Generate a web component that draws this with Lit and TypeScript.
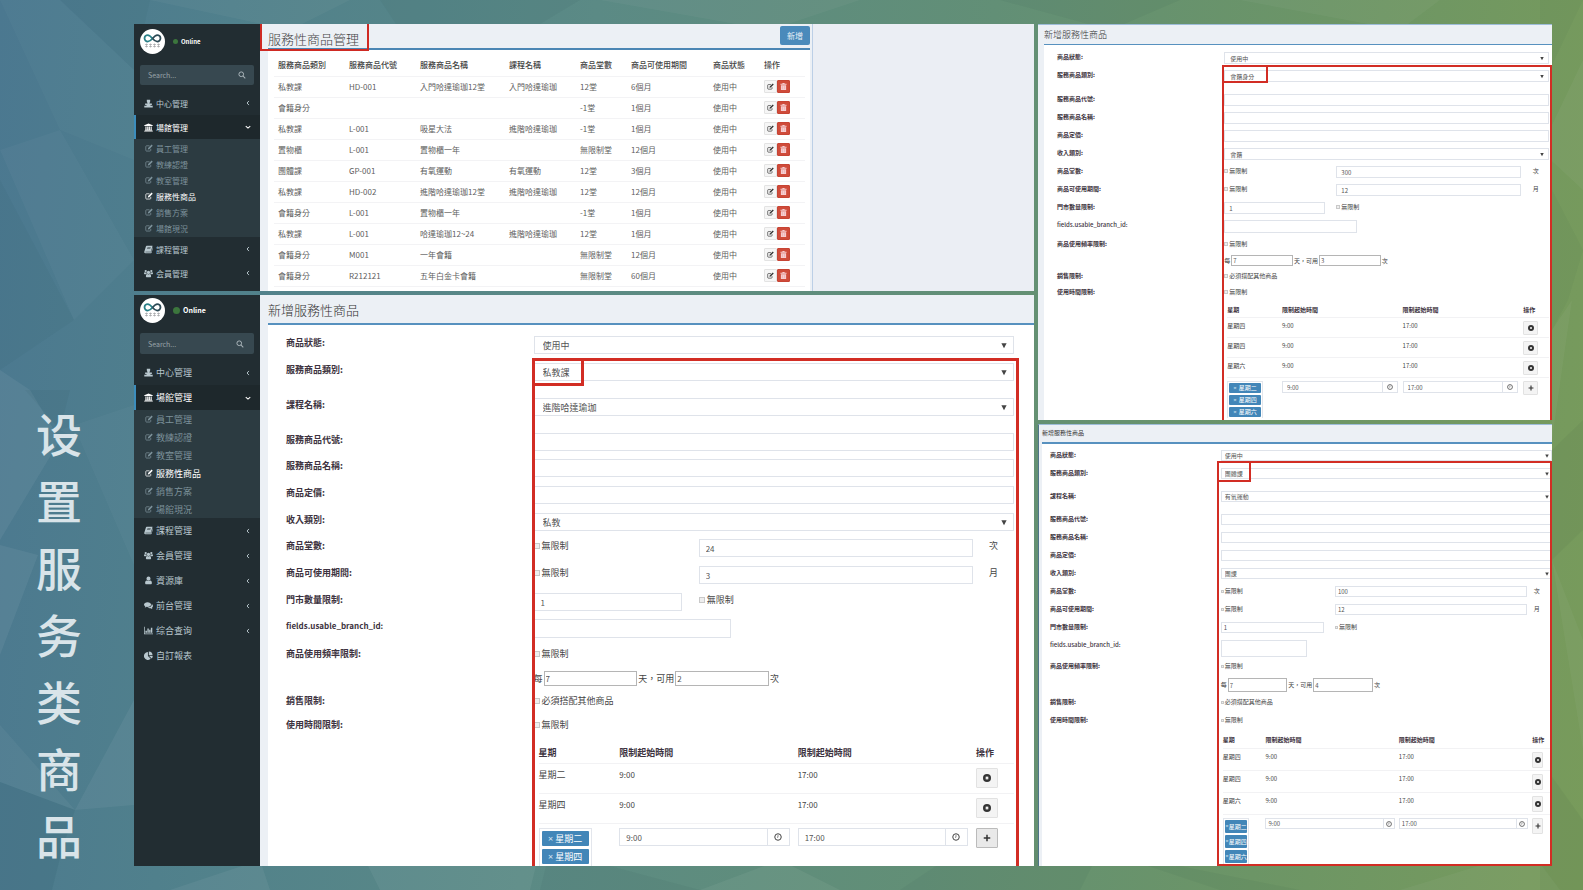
import { LitElement, html, svg, css, nothing } from "lit";
import { customElement, property } from "lit/decorators.js";
import { classMap } from "lit/directives/class-map.js";

const glyphs: Record<string, unknown> = {
  center: svg`<path d="M5 1.500h6v2.400c0 1.500-.6 2.500-1.300 3.100v1H14v2.500h-2.500V12h4V15H.5v-3h4v-1.500H2V8h4.300V7C5.600 6.400 5 5.400 5 3.900z"/>`,
  bank: svg`<path d="M8 .8 15.500 4v1.400H.5V4zM2.500 6.200h2v5.600h1.200V6.200h2v5.600h.8V6.200h2v5.600h1.200V6.200h2v5.600l1 .8v.6h-13v-.6l.8-.8zM.3 13.700h15.400v1.500H.3z"/>`,
  edit: svg`<path d="M11.500 9.500v3.200c0 .8-.6 1.400-1.400 1.400H3c-.8 0-1.400-.6-1.400-1.400V5c0-.8.6-1.400 1.400-1.400h6" fill="none" stroke="currentColor" stroke-width="1.500"/><path d="M13.200 1.200l2.200 2.200-6.900 7-2.900.6.6-2.900z"/>`,
  search: svg`<circle cx="6.500" cy="6.500" r="4.700" fill="none" stroke="currentColor" stroke-width="2"/><path d="M9.600 11l1.400-1.400 4.300 4.200-1.400 1.500z"/>`,
  book: svg`<path d="M4.800 1.500h10.400l-2.800 10.300H3.200c-.8 0-1 1 0 1.100h9.700l2.600-8.800.5.6-2.500 9c-.1.500-.5.800-1 .8H2.600C.8 14.500 0 13 .6 11.400L3.400 2.700c.2-.7.700-1.200 1.400-1.200zM6.200 4l-.3 1h6l.3-1zm-.7 2.300-.3 1h6l.3-1z" fill-rule="evenodd"/>`,
  users: svg`<circle cx="8" cy="6" r="2.900"/><circle cx="3" cy="3.700" r="2"/><circle cx="13" cy="3.700" r="2"/><path d="M3.400 13c0-2.600 1-4 2.300-4 1.400 1.100 3.200 1.100 4.600 0 1.300 0 2.300 1.400 2.300 4 0 1-.6 1.800-1.600 1.800H5c-1 0-1.600-.8-1.600-1.800zM0 8c0-1.400.5-2.400 1.500-2.400 1 .7 1.900.7 2.800.3C4.300 7 4.500 7.700 5 8.400c-1 0-1.600.4-2 1H1.200C.5 9.400 0 8.800 0 8zM16 8c0-1.400-.5-2.400-1.500-2.400-1 .7-1.900.7-2.800.3 0 1.100-.2 1.800-.7 2.500 1 0 1.600.4 2 1h1.800c.7 0 1.200-.6 1.200-1.400z"/>`,
  user: svg`<circle cx="8" cy="4.700" r="3.600"/><path d="M2 12.500c0-3 1-4.700 2.900-4.700 1.900 1.500 4.300 1.500 6.200 0 1.900 0 2.900 1.700 2.900 4.700 0 1.400-.8 2.300-2 2.300H4c-1.200 0-2-.9-2-2.300z"/>`,
  comments: svg`<path d="M6.300 2C2.800 2 0 3.900 0 6.300c0 1.400.9 2.600 2.300 3.400L1.400 11.600c1.400-.2 2.500-.7 3.400-1.200 4.200.5 7.800-1.500 7.800-4.100C12.600 3.900 9.800 2 6.300 2z"/><path d="M13.700 5.500c.5 3.400-3 6-7.500 6.100 1.600 1.200 3.800 1.500 5.600 1.100.9.700 2 1.100 3.100 1.200l-.8-1.700c2.700-1.700 2.400-5.200-.4-6.700z"/>`,
  chart: svg`<path d="M0 1.500h1.300v11.700H16v1.300H0zM2.500 8.500h2.700V12H2.500zM6 4.500h2.500V12H6zM9.200 6.500h2.300V12H9.200zM12.200 3h2.600v9h-2.600z"/>`,
  pie: svg`<path d="M7 2v7l5 4.800A7 7 0 1 1 7 2z"/><path d="M8.500.8a6.800 6.800 0 0 1 6.700 6.700H8.500z"/><path d="M9.200 8.800h6.300c0 1.800-.7 3.300-1.800 4.400z"/>`,
  left: svg`<path d="M10.500 2.500 5.500 8l5 5.500" fill="none" stroke="currentColor" stroke-width="2.600"/>`,
  down: svg`<path d="M2 5.500 8 11l6-5.500" fill="none" stroke="currentColor" stroke-width="2.800"/>`,
  trash: svg`<path d="M5.500 0h5v1.500H15v2.500H1V1.500h4.500zM2 5h12v11H2z"/><path d="M5.500 7v7M10.500 7v7" stroke="#e59a98" stroke-width="1"/>`,
  caret: svg`<path d="M1 2h14L8 15z"/>`,
  close: svg`<circle cx="8" cy="8" r="8"/><path d="M5.500 5.500l5 5M10.500 5.500l-5 5" stroke="#f4f4f4" stroke-width="2.200"/>`,
  plus: svg`<path d="M6.500 1.500h3v5h5v3h-5v5h-3v-5h-5v-3h5z"/>`,
  clock: svg`<circle cx="8" cy="8" r="6.500" fill="none" stroke="currentColor" stroke-width="2"/><path d="M8 4v4.500H6" fill="none" stroke="currentColor" stroke-width="1.200"/>`,
};

const icon = (name: string) =>
  html`<svg class="icon" viewBox="0 0 16 16" fill="currentColor" aria-hidden="true">${glyphs[name]}</svg>`;

const base = css`
  * { box-sizing: border-box; }
  button, input, select { font: inherit; color: inherit; margin: 0; border-radius: 0; }
  .icon { display: block; flex: none; }
`;

interface MenuItem { icon: string; text: string; open?: boolean; leaf?: boolean; }

const menuItems: MenuItem[] = [
  { icon: "center", text: "中心管理" },
  { icon: "bank", text: "場館管理", open: true },
  { icon: "book", text: "課程管理" },
  { icon: "users", text: "会員管理" },
  { icon: "user", text: "資源庫" },
  { icon: "comments", text: "前台管理" },
  { icon: "chart", text: "综合查询" },
  { icon: "pie", text: "自訂報表", leaf: true },
];
const subItems = ["員工管理", "教練認證", "教室管理", "服務性商品", "銷售方案", "場館現況"];

@customElement("side-menu")
export class SideMenu extends LitElement {
  @property({ type: Number }) count = 8;

  static styles = [base, css`
    :host {
      --head: 34px; --fs: 8px; --item: 24px; --sub: 16px; --pad: 1px; --online: 6px; --dot: 5px; --search: 20px; --top: 7px; --end: 8px;
      display: block; background: #222d32; color: #b8c7ce; overflow: hidden; font-size: var(--fs);
    }
    :host([large]) {
      --head: 30px; --fs: 9px; --item: 25px; --sub: 18px; --pad: 0px; --online: 7px; --dot: 7px; --search: 21px; --top: 8px; --end: 10px;
    }
    .user { display: flex; align-items: center; height: var(--head); padding-left: 6px; color: #fff; }
    .logo { width: 25px; height: 25px; flex: none; }
    .dot { width: var(--dot); height: var(--dot); border-radius: 50%; background: #3c763d; margin: 0 3px 0 8px; }
    .online { font-size: var(--online); font-weight: 700; }
    .search { display: flex; align-items: center; height: var(--search); margin: var(--top) 6px 6px 6px; padding: 0 var(--end) 0 8px;
      background: #374850; border-radius: 2px; }
    .search input { flex: 1; min-width: 0; border: 0; padding: 0; background: none; font-size: 7px; outline: 0; }
    .search input::placeholder { color: #97a3a8; }
    .search button { border: 0; padding: 0; background: none; color: #a9b4b9; }
    .search .icon { width: 8px; height: 8px; }
    nav a { display: flex; align-items: center; color: inherit; text-decoration: none; }
    .item { height: var(--item); padding: 0 9px 0 8px; border-left: 2px solid transparent; gap: 3px; }
    .item .icon { width: 9px; height: 9px; }
    .item .arrow { margin-left: auto; display: block; }
    .item .arrow .icon { width: 6px; height: 6px; }
    .item.open { background: #1e282c; color: #fff; border-left-color: #3c8dbc; }
    .sub { background: #2c3b41; padding: var(--pad) 0; color: #7d929b; }
    .sub a { height: var(--sub); padding-left: 11px; gap: 3px; }
    .sub .icon { width: 8px; height: 8px; }
    .sub .current { color: #fff; }
  `];

  render() {
    return html`
      <div class="user">
        <svg class="logo" viewBox="0 0 50 50" aria-hidden="true">
          <circle cx="25" cy="25" r="25" fill="#fff"/>
          <path d="M25 19c-4-5-6-7-9.500-7a6.500 6.500 0 0 0 0 13c3.500 0 5.500-1 9.500-6" fill="none" stroke="#2a8088" stroke-width="3.500"/>
          <path d="M25 19c4-5 6-7 9.500-7a6.500 6.500 0 0 1 0 13c-3.500 0-5.500-1-9.500-6" fill="none" stroke="#2d4a56" stroke-width="3.500"/>
          <path d="M10 31h6M18 31h6M26 31h6M34 31h6M10 35h6M18 35h6M26 35h6M34 35h6M13 29v8M21 29v8M29 29v8M37 29v8" stroke="#9a9c9f" stroke-width="1.200"/>
        </svg>
        <span class="dot"></span><span class="online">Online</span>
      </div>
      <div class="search">
        <input type="text" placeholder="Search..." aria-label="Search" />
        <button type="button" aria-label="Search">${icon("search")}</button>
      </div>
      <nav>
        ${menuItems.slice(0, this.count).map((m) => html`
          <a href="#" class=${classMap({ item: true, open: !!m.open })}>
            ${icon(m.icon)}<span>${m.text}</span>
            ${m.leaf ? nothing : html`<span class="arrow">${icon(m.open ? "down" : "left")}</span>`}
          </a>
          ${m.open ? html`<div class="sub">
            ${subItems.map((t, i) => html`<a href="#" class=${classMap({ current: i === 3 })}>${icon("edit")}<span>${t}</span></a>`)}
          </div>` : nothing}`)}
      </nav>`;
  }
}

const columns = ["服務商品類別", "服務商品代號", "服務商品名稱", "課程名稱", "商品堂數", "商品可使用期間", "商品狀態", "操作"];
const products = [
  ["私教課", "HD-001", "入門哈達瑜珈12堂", "入門哈達瑜珈", "12堂", "6個月"],
  ["會籍身分", "", "", "", "-1堂", "1個月"],
  ["私教課", "L-001", "吸星大法", "進階哈達瑜珈", "-1堂", "1個月"],
  ["置物櫃", "L-001", "置物櫃一年", "", "無限制堂", "12個月"],
  ["團體課", "GP-001", "有氧運動", "有氧運動", "12堂", "3個月"],
  ["私教課", "HD-002", "進階哈達瑜珈12堂", "進階哈達瑜珈", "12堂", "12個月"],
  ["會籍身分", "L-001", "置物櫃一年", "", "-1堂", "1個月"],
  ["私教課", "L-001", "哈達瑜珈12~24", "進階哈達瑜珈", "12堂", "1個月"],
  ["會籍身分", "M001", "一年會籍", "", "無限制堂", "12個月"],
  ["會籍身分", "R212121", "五年白金卡會籍", "", "無限制堂", "60個月"],
];

@customElement("product-list")
export class ProductList extends LitElement {
  static styles = [base, css`
    :host { display: grid; grid-template-columns: 553fr 221fr; background: #ebeef4; overflow: hidden; color: #606060; font-size: 8px; }
    .main { position: relative; padding: 0 2px 0 8px; border-right: 1px solid #bccfe6; display: flex; flex-direction: column; background: #ecf0f5; }
    header { display: flex; align-items: center; justify-content: space-between; height: 26px; border-bottom: 2px solid #4b86b4; }
    h2 { margin: 0; font-size: 13px; font-weight: 300; color: #444; line-height: 26px; padding-top: 5px; }
    header button { width: 30px; height: 19px; padding: 0; border: 0; border-radius: 2px; background: #4a8abb; color: #e6f0f7; margin-bottom: 1px; }
    .box { flex: 1; background: #fff; padding: 5px 5px 0 6px; }
    table { width: 100%; table-layout: fixed; border-collapse: collapse; }
    th, td { height: 21px; padding: 0 0 0 4px; text-align: left; white-space: nowrap; border-bottom: 1px solid #f3f3f5; line-height: 12px; }
    th { color: #444; font-weight: 500; }
    .c0, .c1, .c3 { width: calc(100% * 71 / 531); }
    .c2 { width: calc(100% * 89 / 531); }
    .c4, .c6 { width: calc(100% * 51 / 531); }
    .c5 { width: calc(100% * 82 / 531); }
    .acts { display: flex; }
    .acts button { display: grid; place-items: center; width: 13px; height: 13px; padding: 0; border: 1px solid #e3e3e3; background: #f6f6f6; color: #333; border-radius: 1px; }
    .acts button.del { background: #cf4b3a; border-color: #c74434; color: #f6cfd2; }
    .acts .icon { width: 7px; height: 7px; }
    .mark { position: absolute; left: 0; top: 0; width: 109px; height: 27px; border: 2px solid #cf2a23; border-top: 0; }
  `];

  render() {
    return html`
      <div class="main">
        <header><h2>服務性商品管理</h2><button type="button">新增</button></header>
        <div class="box">
          <table>
            <thead><tr>${columns.map((c, i) => html`<th class="c${i}">${c}</th>`)}</tr></thead>
            <tbody>
              ${products.map((p) => html`<tr>
                ${p.map((v) => html`<td>${v}</td>`)}
                <td>使用中</td>
                <td><div class="acts">
                  <button type="button" aria-label="編輯">${icon("edit")}</button>
                  <button type="button" class="del" aria-label="刪除">${icon("trash")}</button>
                </div></td>
              </tr>`)}
            </tbody>
          </table>
        </div>
        <div class="mark"></div>
      </div>`;
  }
}

interface FormData {
  kind: string; course?: string; income: string; sessions: string; months: string; times: string;
  days: string[]; tags: string[];
}

@customElement("product-form")
export class ProductForm extends LitElement {
  @property({ attribute: false }) data!: FormData;

  static styles = [base, css`
    :host {
      --title: 13px; --head: 30px; --rule: 2px; --fs: 9px; --lh: 13px; --bh: 18px; --edge: 8px; --num: 8px;
      --body: 11px 20px 0 18px; --s: 26px; --m: 27px; --l: 35px; --branch: 28px; --branch-h: 19px; --branch-w: 41%;
      --pad: 8px; --ipad: 6px; --cols: 165fr 274fr 41fr; --unit: 16px; --check: 6px; --check-gap: 2px;
      --freq-gap: 11px; --freq-h: 15px; --freq-w: 19.5%; --freq-row: 47px; --sale-row: 24px;
      --t-gap: 15px; --t-in: 5px; --t-pad: 4px; --t-row: 30px; --w1: 17%; --w2: 37.5%; --btn-w: 22px; --btn-h: 20px;
      --g: 8px; --addon: 22px; --tag-w: 66%; --tag-h: 15px; --tag-gap: 3px; --ico: 8px;
      --f-top: -5px; --f-left: -2px; --f-right: -5px; --f-bottom: -20px; --f-line: 3px; --f-w: 52px; --f-h: 28px;
      display: flex; flex-direction: column; overflow: hidden; background: #ecf0f5; color: #444; font-size: var(--fs); line-height: var(--lh);
    }
    :host([size="small"]), :host([size="tiny"]) {
      --title: 9px; --head: 21px; --rule: 1px; --fs: 6px; --lh: 9px; --bh: 12px; --edge: 6px; --num: 6px;
      --body: 7px 3px 0 13px; --s: 18px; --m: 18px; --l: 24px; --branch: 19px; --branch-h: 13px;
      --pad: 5px; --ipad: 4px; --cols: 107fr 176fr 27fr; --unit: 12px; --check: 4px; --check-gap: 1px;
      --freq-gap: 7px; --freq-h: 11px; --freq-w: 19%; --freq-row: 32px; --sale-row: 16px;
      --t-gap: 9px; --t-in: 3px; --t-pad: 3px; --t-row: 20px; --btn-w: 15px; --btn-h: 14px;
      --g: 5px; --addon: 15px; --tag-w: 65%; --tag-h: 10px; --tag-gap: 2px; --ico: 6px;
      --f-right: -3px; --f-line: 2px; --f-w: 46px; --f-h: 18px;
      border-top: 1px solid #9dbcd8;
    }
    :host([size="tiny"]) {
      --title: 6px; --head: 20px; --rule: 2px; --lh: 10px; --bh: 11px; --edge: 3px;
      --body: 6px 0 0 8px; --l: 23px; --branch: 21px; --branch-h: 17px; --branch-w: 26%;
      --pad: 3px; --ipad: 2px; --cols: 109fr 183fr 24fr; --unit: 7px; --check: 3px;
      --freq-h: 14px; --freq-w: 18%; --freq-row: 36px; --sale-row: 18px;
      --t-gap: 10px; --t-in: 2px; --t-row: 22px; --w1: 13%; --w2: 40.5%; --btn-w: 11px; --btn-h: 16px;
      --g: 4px; --addon: 11px; --tag-w: 62%; --tag-h: 13px;
      --f-top: -7px; --f-left: -4px; --f-right: 0px; --f-bottom: 0px; --f-w: 34px; --f-h: 21px;
      border-left: 1px solid #50758a;
    }
    header { flex: none; display: flex; align-items: center; height: var(--head); margin-left: var(--edge); border-bottom: var(--rule) solid #5791bf; }
    :host([size]) header { margin-top: -1px; }
    h2 { margin: 0; font-size: var(--title); font-weight: 300; color: #333; }
    :host([size="tiny"]) h2 { font-weight: 400; }
    form { flex: 1; display: flex; flex-direction: column; margin-left: var(--edge); padding: var(--body); background: #fff; }
    .rest { flex: 1; position: relative; }
    .row { display: grid; grid-template-columns: 34% 1fr; align-items: start; height: var(--m); }
    .row.s { height: var(--s); }
    .row.l { height: var(--l); }
    .row.branch { height: var(--branch); }
    .row.freq { height: var(--freq-row); }
    .row.sale { height: var(--sale-row); }
    .row.time { height: auto; }
    .name { font-weight: 700; color: #3d3340; white-space: nowrap; }
    .branch .name { font-size: var(--num); }
    :host([size]) .branch .name { font-weight: 500; }
    .pick { display: grid; align-items: center; }
    .pick > * { grid-area: 1 / 1; }
    .pick .icon { justify-self: end; width: 6px; height: 7px; margin-right: 7px; color: #444; pointer-events: none; }
    :host([size]) .pick .icon { width: 4px; height: 5px; margin-right: 5px; }
    :host([size="tiny"]) .pick .icon { height: 6px; margin-right: 3px; }
    select, input[type="text"] { appearance: none; width: 100%; height: var(--bh); padding: 0 0 0 var(--pad); line-height: var(--lh);
      border: 1px solid #dfe3ea; background: #fff; color: #555; outline: 0; min-width: 0; }
    input[type="text"] { padding-left: var(--ipad); font-size: var(--num); }
    .cols { display: grid; grid-template-columns: var(--cols); align-items: start; }
    .cols .unit { padding-left: var(--unit); }
    .cols .store { width: 90%; }
    input.code { width: var(--branch-w); height: var(--branch-h); }
    .check { display: flex; align-items: center; gap: var(--check-gap); white-space: nowrap; }
    .check input { appearance: none; width: var(--check); height: var(--check); border: 1px solid #c9c9c9; background: #eee; }
    .line { display: flex; align-items: center; gap: 1px; margin-top: var(--freq-gap); white-space: nowrap; }
    .line input[type="text"] { width: var(--freq-w); height: var(--freq-h); padding-left: 1px; border-color: #b5b5b5; }
    table { width: calc(100% - var(--t-in)); margin: var(--t-gap) 0 0 var(--t-in); table-layout: fixed; border-collapse: separate; border-spacing: 0; }
    th { padding: 0 0 var(--t-pad); text-align: left; font-weight: 700; color: #3d3340; white-space: nowrap; }
    td { height: var(--t-row); padding: var(--t-pad) 0 0; vertical-align: top; border-top: 1px solid #f2f2f4; }
    .clock-text { font-size: var(--num); }
    .w1 { width: var(--w1); }
    .w2 { width: var(--w2); }
    .group { display: flex; margin-right: var(--g); }
    .group input { flex: 1; }
    .addon { display: grid; place-items: center; flex: none; width: var(--addon); border: 1px solid #dfe3ea; border-left: 0; }
    td .icon { width: var(--ico); height: var(--ico); }
    .act { display: grid; place-items: center; width: var(--btn-w); height: var(--btn-h); padding: 0; border: 1px solid #e2e2e2; background: #f4f4f4; color: #333; border-radius: 1px; }
    .add { background: #e9e9e9; border-color: #bbb; }
    :host([size]) .add { background: #f4f4f4; border-color: #e2e2e2; }
    .tags { display: grid; gap: var(--tag-gap); width: var(--tag-w); padding: 2px; border: 1px solid #e3e6ec; border-bottom: 0; }
    :host([size]) .tags { padding: 1px; }
    .tags button { display: flex; align-items: center; justify-content: center; gap: 2px; height: var(--tag-h); padding: 0; border: 0; border-radius: 1px;
      background: #4286b8; color: #fff; line-height: var(--tag-h); white-space: nowrap; }
    :host([size="tiny"]) .tags button { gap: 0; }
    .times { font-family: "Noto Sans", sans-serif; color: #d5e5f1; }
    .frame, .mark { position: absolute; top: var(--f-top); left: calc(34% + var(--f-left)); border: var(--f-line) solid #d22d24; pointer-events: none; }
    .frame { right: var(--f-right); bottom: var(--f-bottom); }
    .mark { width: var(--f-w); height: var(--f-h); }
  `];

  private select(id: string, name: string, value: string, size = "") {
    return html`<div class="row ${size}">
      <label class="name" for=${id}>${name}:</label>
      <div class="pick"><select id=${id}><option>${value}</option></select>${icon("caret")}</div>
    </div>`;
  }

  private text(id: string, name: string, size = "") {
    return html`<div class="row ${size}"><label class="name" for=${id}>${name}:</label><input id=${id} type="text" /></div>`;
  }

  private check(text = "無限制") {
    return html`<label class="check"><input type="checkbox" />${text}</label>`;
  }

  private amount(id: string, name: string, value: string, unit: string) {
    return html`<div class="row">
      <label class="name" for=${id}>${name}:</label>
      <div class="cols">${this.check()}<input id=${id} type="text" .value=${value} /><span class="unit">${unit}</span></div>
    </div>`;
  }

  private time(value: string, name: string) {
    return html`<div class="group"><input type="text" aria-label=${name} .value=${value} /><span class="addon">${icon("clock")}</span></div>`;
  }

  render() {
    const d = this.data;
    return html`
      <header><h2>新增服務性商品</h2></header>
      <form>
        ${this.select("status", "商品狀態", "使用中")}
        <div class="rest">
          ${this.select("kind", "服務商品類別", d.kind, "l")}
          ${d.course ? this.select("course", "課程名稱", d.course, "l") : nothing}
          ${this.text("code", "服務商品代號", "s")}
          ${this.text("title", "服務商品名稱")}
          ${this.text("price", "商品定價")}
          ${this.select("income", "收入類別", d.income, "s")}
          ${this.amount("sessions", "商品堂數", d.sessions, "次")}
          ${this.amount("months", "商品可使用期間", d.months, "月")}
          <div class="row s">
            <label class="name" for="store">門市數量限制:</label>
            <div class="cols"><input id="store" class="store" type="text" .value=${"1"} />${this.check()}</div>
          </div>
          <div class="row branch">
            <label class="name" for="branch">fields.usable_branch_id:</label>
            <input id="branch" class="code" type="text" />
          </div>
          <div class="row freq">
            <span class="name">商品使用頻率限制:</span>
            <div>
              ${this.check()}
              <div class="line">
                <label for="every">每</label><input id="every" type="text" .value=${"7"} />
                <label for="times">天，可用</label><input id="times" type="text" .value=${d.times} /><span>次</span>
              </div>
            </div>
          </div>
          <div class="row sale"><span class="name">銷售限制:</span>${this.check("必須搭配其他商品")}</div>
          <div class="row time">
            <span class="name">使用時間限制:</span>
            <div>
              ${this.check()}
              <table>
                <thead><tr><th class="w1">星期</th><th class="w2">限制起始時間</th><th class="w2">限制起始時間</th><th>操作</th></tr></thead>
                <tbody>
                  ${d.days.map((day) => html`<tr>
                    <td>${day}</td><td class="clock-text">9:00</td><td class="clock-text">17:00</td>
                    <td><button type="button" class="act" aria-label="刪除">${icon("close")}</button></td>
                  </tr>`)}
                  <tr>
                    <td><div class="tags">${d.tags.map((t) => html`<button type="button"><span class="times">×</span><span>${t}</span></button>`)}</div></td>
                    <td>${this.time("9:00", "限制起始時間")}</td>
                    <td>${this.time("17:00", "限制結束時間")}</td>
                    <td><button type="button" class="act add" aria-label="新增">${icon("plus")}</button></td>
                  </tr>
                </tbody>
              </table>
            </div>
          </div>
          <div class="frame"></div>
          <div class="mark"></div>
        </div>
      </form>`;
  }
}

const privateLesson: FormData = {
  kind: "私教課", course: "進階哈達瑜珈", income: "私教", sessions: "24", months: "3", times: "2",
  days: ["星期二", "星期四"], tags: ["星期二", "星期四"],
};
const membership: FormData = {
  kind: "會籍身分", income: "會籍", sessions: "300", months: "12", times: "3",
  days: ["星期四", "星期四", "星期六"], tags: ["星期二", "星期四", "星期六"],
};
const groupLesson: FormData = {
  kind: "團體課", course: "有氧運動", income: "團課", sessions: "100", months: "12", times: "4",
  days: ["星期四", "星期四", "星期六"], tags: ["星期二", "星期四", "星期六"],
};

@customElement("app-root")
export class AppRoot extends LitElement {
  static styles = [base, css`
    :host {
      display: grid; grid-template-columns: 134px minmax(0, 900fr) minmax(0, 518fr);
      height: 100vh; padding-right: 31px; box-sizing: border-box; position: relative; overflow: hidden;
      font-family: "Noto Sans CJK TC", "Noto Sans", sans-serif;
      background: linear-gradient(95deg, #4b7890 0%, #50808c 14%, #5b8a85 36%, #628f76 60%, #6c9566 80%, #789b5b 100%);
    }
    .facets { position: absolute; inset: 0; width: 100%; height: 100%; opacity: .75; }
    h1 { position: relative; margin: 0; align-self: end; justify-self: center; width: 48px; padding-bottom: 22px; margin-right: 16px;
      font: 500 46px/67px "Noto Sans CJK SC", sans-serif; color: #d9e4e9; word-break: break-all; text-align: center; }
    .col { position: relative; display: grid; gap: 4px; padding: 24px 0; min-height: 0; }
    .left { grid-template-rows: minmax(0, 267fr) minmax(0, 571fr); }
    .right { grid-template-rows: minmax(0, 396fr) minmax(0, 442fr); padding-left: 4px; }
    .admin { display: grid; grid-template-columns: 126px minmax(0, 1fr); min-height: 0; overflow: hidden; }
  `];

  render() {
    return html`
      <svg class="facets" viewBox="0 0 1583 890" preserveAspectRatio="none" aria-hidden="true">
        <g fill="#fff">
          <path d="M0 0h60l74 70v90L60 130z" opacity=".03"/>
          <path d="M0 150l60-20 74 130-60 60z" opacity=".04"/>
          <path d="M0 370l30 20 30 50-60 100z" opacity=".08"/>
          <path d="M60 430l74-25v160L80 440z" opacity=".04"/>
          <path d="M0 545l38 10L0 655z" opacity=".08"/>
          <path d="M75 810l59-110v105z" opacity=".07"/>
          <path d="M0 725l75 85-75-28z" opacity=".06"/>
          <path d="M170 890l90-30 10 30zM380 890l-20-40h180l-10 40zM700 890l80-30 60 30z" opacity=".07"/>
          <path d="M1540 150l43-90v130zM1552 330l20-30-20 140z" opacity=".05"/>
          <path d="M1552 560l31 80v110zM1400 890l130-40 30 40z" opacity=".05"/>
          <path d="M150 0h200l-60 30zM600 0h260l-90 30zM1240 0h200l-40 30z" opacity=".05"/>
        </g>
        <g fill="#10323a">
          <path d="M60 0h90l-16 70z" opacity=".05"/>
          <path d="M0 180l74 140L0 370z" opacity=".05"/>
          <path d="M25 390h45l-10 40z" opacity=".06"/>
          <path d="M0 782l75 28-13 40-10 40H0z" opacity=".09"/>
          <path d="M540 890l10-40 150 40zM900 890l60-40h140l-20 40zM1100 850l120 40h80z" opacity=".06"/>
          <path d="M1540 0h43l-43 90zM1552 190l31 60-15 50-16 30z" opacity=".05"/>
          <path d="M1552 450l31-30v110l-31 30zM1540 760l43 60v70h-43z" opacity=".06"/>
          <path d="M380 0h200l-50 30H400zM1000 0h180l-70 30z" opacity=".06"/>
        </g>
      </svg>
      <h1>设置服务类商品</h1>
      <div class="col left">
        <section class="admin"><side-menu .count=${4}></side-menu><product-list></product-list></section>
        <section class="admin"><side-menu large></side-menu><product-form .data=${privateLesson}></product-form></section>
      </div>
      <div class="col right">
        <product-form size="small" .data=${membership}></product-form>
        <product-form size="tiny" .data=${groupLesson}></product-form>
      </div>`;
  }
}
